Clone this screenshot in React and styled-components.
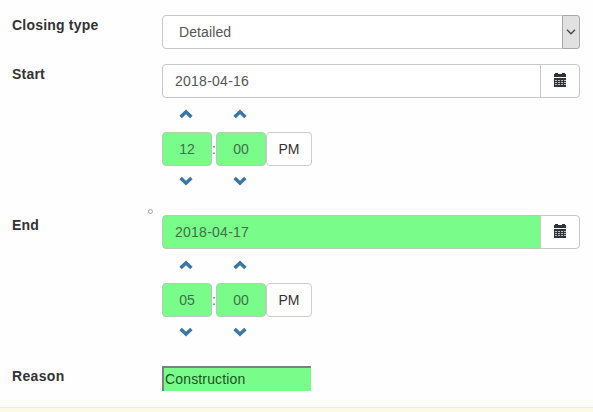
import React from "react";
import styled, { createGlobalStyle } from "styled-components";

const GlobalStyle = createGlobalStyle`
  * { box-sizing: border-box; }
  body {
    margin: 0;
    background: #fefefe;
    color: #333;
    font: 14px/20px "Liberation Sans", Arial, sans-serif;
    overflow: hidden;
  }
`;

const green = "#7afc8b";

const Page = styled.div`
  height: 412px;
  display: flex;
  flex-direction: column;
`;

const Form = styled.form`
  flex: none;
  height: 407px;
  padding: 15px 13px 0 12px;
`;

const Row = styled.div`
  display: grid;
  grid-template-columns: 150px 418px;
  align-items: start;
  height: ${(p) => p.$height}px;
`;

const Label = styled.label`
  font-weight: bold;
  letter-spacing: ${(p) => p.$spacing || 0.2}px;
`;

const SelectBox = styled.div`
  display: flex;
  justify-content: space-between;
  height: 34px;
  border: 1px solid #c8c8c8;
  border-radius: 4px;
  background: #fff;
  color: #555;
  line-height: 32px;
  padding-left: 16px;
  letter-spacing: 0.1px;
`;

const SelectArrow = styled.span`
  width: 18px;
  margin: -1px -1px -1px 0;
  border: 1px solid #a9a9a9;
  border-radius: 0 3px 3px 0;
  background: #e1e1e1;
  display: flex;
  align-items: center;
  justify-content: center;
`;

const DateGroup = styled.div`
  display: flex;
  height: 34px;
`;

const DateField = styled.div`
  width: 379px;
  padding-left: 12px;
  border: 1px solid ${(p) => (p.$marked ? "#b4cdb6" : "#c8c8c8")};
  border-radius: 4px 0 0 4px;
  line-height: 32px;
  letter-spacing: 0.25px;
  color: ${(p) => (p.$marked ? "#3f7047" : "#555")};
  background: ${(p) => (p.$marked ? green : "#fff")};
`;

const CalendarButton = styled.button`
  width: 40px;
  margin-left: -1px;
  padding: 0 1px 2px 0;
  display: flex;
  align-items: center;
  justify-content: center;
  border: 1px solid #c8c8c8;
  border-radius: 0 4px 4px 0;
  background: #fff;
`;

const TimeGrid = styled.div`
  display: grid;
  grid-template-columns: 50px 4px 50px 46px;
  grid-template-rows: 34px 34px 32px;
`;

const Step = styled.span`
  grid-column: ${(p) => p.$column};
  display: flex;
  align-items: center;
  justify-content: center;
  padding: 0 2px 2px 0;
`;

const TimeField = styled.div`
  border: 1px solid #b4cdb6;
  border-radius: 4px;
  background: ${green};
  color: #3f7047;
  text-align: center;
  line-height: 32px;
`;

const Colon = styled.span`
  line-height: 34px;
  color: #666;
`;

const Meridian = styled.button`
  padding: 0;
  border: 1px solid #ccc;
  border-radius: 4px;
  background: #fff;
  color: #333;
  font: inherit;
`;

const ReasonInput = styled.input`
  width: 149px;
  height: 25px;
  padding: 0 1px 1px;
  border: 0 solid #71877a;
  border-width: 2px 0 0 2px;
  background: ${green};
  color: #185522;
  font: inherit;
  letter-spacing: 0.15px;
  outline: none;
`;

const Marker = styled.i`
  position: absolute;
  left: 148px;
  top: 209px;
  width: 5px;
  height: 5px;
  border: 1px solid #aaa5bd;
  border-radius: 50%;
`;

const Notice = styled.div`
  height: 5px;
  border-top: 1px solid #f8ecd2;
  background: #fef8e8;
`;

const Chevron = ({ down }) => (
  <svg width="14" height="10" viewBox="0 0 14 10" fill="#3c76a6">
    <path d={down ? "M2.8.8 7 4.8 11.2.8 13.6 3.2 7 9.5.4 3.2Z" : "M2.8 9.2 7 5.2 11.2 9.2 13.6 6.8 7 .5.4 6.8Z"} />
  </svg>
);

const CalendarIcon = () => (
  <svg width="14" height="14" viewBox="0 0 14 14" shapeRendering="crispEdges">
    <path fill="#30343a" d="M1 1h1V0h3v1h4V0h3v1h1v3H1ZM1 5h12v9H1Z" />
    <path
      fill="none"
      stroke="#b9bec4"
      strokeDasharray="2 1"
      d="M2 7.5h11M2 9.5h11M2 11.5h11"
    />
  </svg>
);

function DateTime({ label, date, hour, marked }) {
  return (
    <Row $height={151}>
      <Label>{label}</Label>
      <div>
        <DateGroup>
          <DateField $marked={marked}>{date}</DateField>
          <CalendarButton type="button" aria-label="Choose date"><CalendarIcon /></CalendarButton>
        </DateGroup>
        <TimeGrid>
          <Step $column={1}><Chevron /></Step>
          <Step $column={3}><Chevron /></Step>
          <span />
          <TimeField>{hour}</TimeField>
          <Colon>:</Colon>
          <TimeField>00</TimeField>
          <Meridian type="button">PM</Meridian>
          <Step $column={1}><Chevron down /></Step>
          <Step $column={3}><Chevron down /></Step>
        </TimeGrid>
      </div>
    </Row>
  );
}

export default function App() {
  return (
    <Page>
      <GlobalStyle />
      <Form>
        <Row $height={49}>
          <Label>Closing type</Label>
          <SelectBox>
            Detailed
            <SelectArrow>
              <svg width="10" height="6" viewBox="0 0 10 6" fill="none" stroke="#444" strokeWidth="1.3">
                <path d="m1 .8 4 4 4-4" />
              </svg>
            </SelectArrow>
          </SelectBox>
        </Row>
        <DateTime label="Start" date="2018-04-16" hour="12" />
        <DateTime label="End" date="2018-04-17" hour="05" marked />
        <Row $height={40}>
          <Label $spacing={0.35}>Reason</Label>
          <ReasonInput defaultValue="Construction" />
        </Row>
      </Form>
      <Marker />
      <Notice />
    </Page>
  );
}
